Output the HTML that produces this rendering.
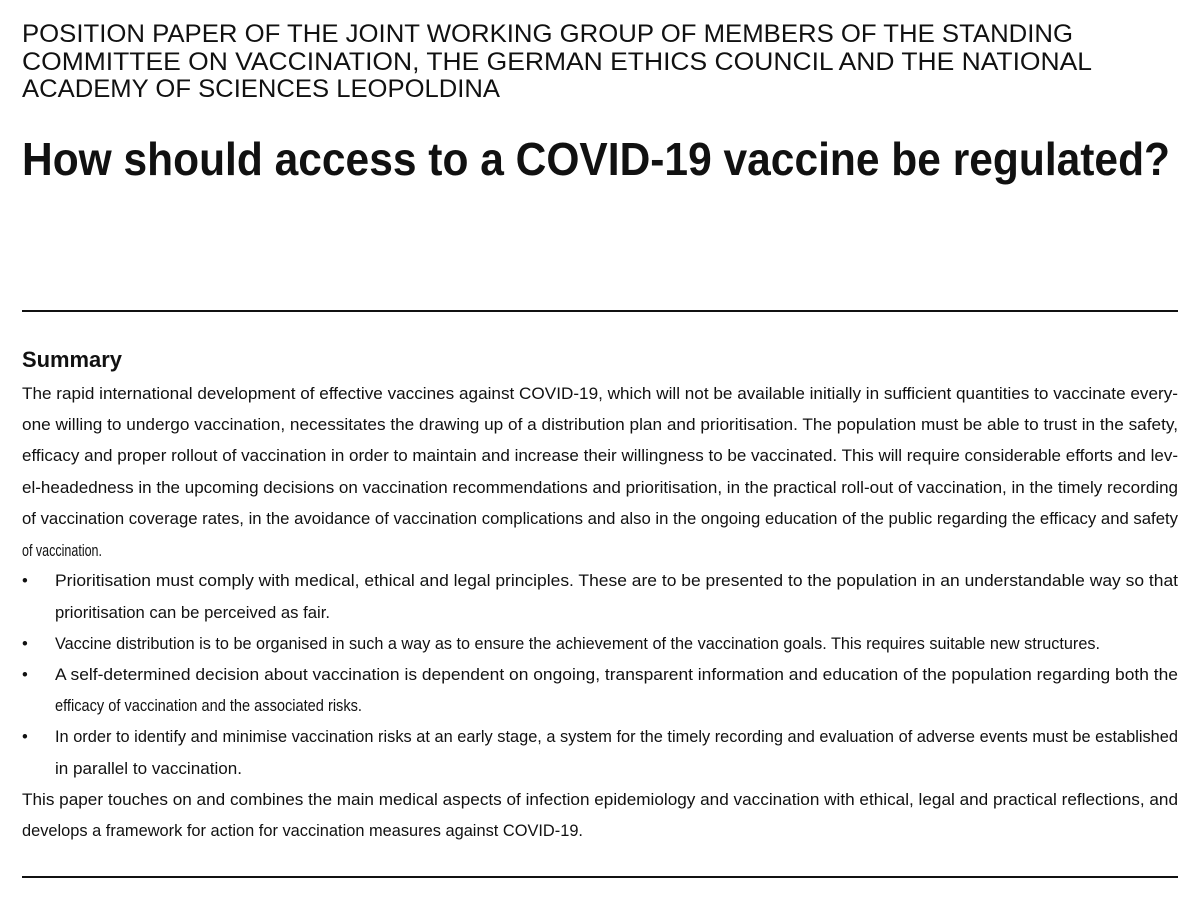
<!DOCTYPE html>
<html><head><meta charset="utf-8"><style>
html,body{margin:0;padding:0;background:#fff;width:1200px;height:902px;overflow:hidden}
svg{display:block}
text{fill:#111;font-family:"Liberation Sans",sans-serif}
.h{font-size:25px}
.t{font-size:46px;font-weight:bold}
.s{font-size:22px;font-weight:bold}
.b{font-size:16.5px}
</style></head><body>
<svg width="1200" height="902" viewBox="0 0 1200 902">
<text class="h" x="22" y="42" textLength="1051" lengthAdjust="spacingAndGlyphs">POSITION PAPER OF THE JOINT WORKING GROUP OF MEMBERS OF THE STANDING</text>
<text class="h" x="22" y="70" textLength="1070" lengthAdjust="spacingAndGlyphs">COMMITTEE ON VACCINATION, THE GERMAN ETHICS COUNCIL AND THE NATIONAL</text>
<text class="h" x="22" y="97" textLength="478" lengthAdjust="spacingAndGlyphs">ACADEMY OF SCIENCES LEOPOLDINA</text>
<text class="t" x="22" y="175" textLength="1148" lengthAdjust="spacingAndGlyphs">How should access to a COVID-19 vaccine be regulated?</text>
<rect x="22" y="310" width="1156" height="2" fill="#111"/>
<text class="s" x="22" y="367" textLength="100" lengthAdjust="spacingAndGlyphs">Summary</text>
<g class="b">
<text class="b" x="22" y="399" textLength="1156" lengthAdjust="spacingAndGlyphs">The rapid international development of effective vaccines against COVID-19, which will not be available initially in sufficient quantities to vaccinate every-</text>
<text class="b" x="22" y="430" textLength="1156" lengthAdjust="spacingAndGlyphs">one willing to undergo vaccination, necessitates the drawing up of a distribution plan and prioritisation. The population must be able to trust in the safety,</text>
<text class="b" x="22" y="461" textLength="1156" lengthAdjust="spacingAndGlyphs">efficacy and proper rollout of vaccination in order to maintain and increase their willingness to be vaccinated. This will require considerable efforts and lev-</text>
<text class="b" x="22" y="493" textLength="1156" lengthAdjust="spacingAndGlyphs">el-headedness in the upcoming decisions on vaccination recommendations and prioritisation, in the practical roll-out of vaccination, in the timely recording</text>
<text class="b" x="22" y="524" textLength="1156" lengthAdjust="spacingAndGlyphs">of vaccination coverage rates, in the avoidance of vaccination complications and also in the ongoing education of the public regarding the efficacy and safety</text>
<text class="b" x="22" y="556" textLength="80" lengthAdjust="spacingAndGlyphs">of vaccination.</text>
<text class="b" x="22" y="586">•</text>
<text class="b" x="55" y="586" textLength="1123" lengthAdjust="spacingAndGlyphs">Prioritisation must comply with medical, ethical and legal principles. These are to be presented to the population in an understandable way so that</text>
<text class="b" x="55" y="618" textLength="275" lengthAdjust="spacingAndGlyphs">prioritisation can be perceived as fair.</text>
<text class="b" x="22" y="649">•</text>
<text class="b" x="55" y="649" textLength="1045" lengthAdjust="spacingAndGlyphs">Vaccine distribution is to be organised in such a way as to ensure the achievement of the vaccination goals. This requires suitable new structures.</text>
<text class="b" x="22" y="680">•</text>
<text class="b" x="55" y="680" textLength="1123" lengthAdjust="spacingAndGlyphs">A self-determined decision about vaccination is dependent on ongoing, transparent information and education of the population regarding both the</text>
<text class="b" x="55" y="711" textLength="307" lengthAdjust="spacingAndGlyphs">efficacy of vaccination and the associated risks.</text>
<text class="b" x="22" y="742">•</text>
<text class="b" x="55" y="742" textLength="1123" lengthAdjust="spacingAndGlyphs">In order to identify and minimise vaccination risks at an early stage, a system for the timely recording and evaluation of adverse events must be established</text>
<text class="b" x="55" y="774" textLength="187" lengthAdjust="spacingAndGlyphs">in parallel to vaccination.</text>
<text class="b" x="22" y="805" textLength="1156" lengthAdjust="spacingAndGlyphs">This paper touches on and combines the main medical aspects of infection epidemiology and vaccination with ethical, legal and practical reflections, and</text>
<text class="b" x="22" y="836" textLength="561" lengthAdjust="spacingAndGlyphs">develops a framework for action for vaccination measures against COVID-19.</text>
</g>
<rect x="22" y="876" width="1156" height="2" fill="#111"/>
</svg>
</body></html>
